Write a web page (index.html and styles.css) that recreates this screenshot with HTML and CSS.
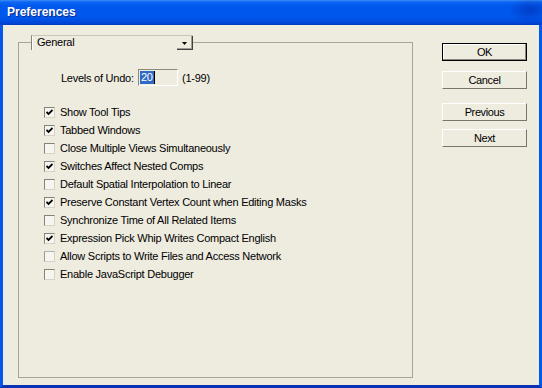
FILE: index.html
```html
<!DOCTYPE html>
<html>
<head>
<meta charset="utf-8">
<title>Preferences</title>
<link rel="stylesheet" href="styles.css">
</head>
<body>
<div class="window">
  <div class="titlebar"><span class="title">Preferences</span></div>
  <div class="client">
    <fieldset class="group">
      <legend class="combo">
        <span class="combo-text">General</span>
        <span class="combo-btn"><svg width="5" height="3" viewBox="0 0 5 3"><path d="M0 0H5L2.5 3Z" fill="#000"/></svg></span>
      </legend>
      <div class="undo-row">
        <span class="label">Levels of Undo:</span>
        <span class="field"><span class="sel">20</span><span class="caret"></span></span>
        <span class="range">(1-99)</span>
      </div>
      <ul class="checks">
        <li class="check"><span class="box on"><svg width="7" height="7" viewBox="0 0 7 7"><path d="M0.5 3L2.5 5L6.5 1" stroke="#000" stroke-width="1.8" fill="none"/></svg></span><span>Show Tool Tips</span></li>
        <li class="check"><span class="box on"><svg width="7" height="7" viewBox="0 0 7 7"><path d="M0.5 3L2.5 5L6.5 1" stroke="#000" stroke-width="1.8" fill="none"/></svg></span><span>Tabbed Windows</span></li>
        <li class="check"><span class="box"></span><span>Close Multiple Views Simultaneously</span></li>
        <li class="check"><span class="box on"><svg width="7" height="7" viewBox="0 0 7 7"><path d="M0.5 3L2.5 5L6.5 1" stroke="#000" stroke-width="1.8" fill="none"/></svg></span><span>Switches Affect Nested Comps</span></li>
        <li class="check"><span class="box"></span><span>Default Spatial Interpolation to Linear</span></li>
        <li class="check"><span class="box on"><svg width="7" height="7" viewBox="0 0 7 7"><path d="M0.5 3L2.5 5L6.5 1" stroke="#000" stroke-width="1.8" fill="none"/></svg></span><span>Preserve Constant Vertex Count when Editing Masks</span></li>
        <li class="check"><span class="box"></span><span>Synchronize Time of All Related Items</span></li>
        <li class="check"><span class="box on"><svg width="7" height="7" viewBox="0 0 7 7"><path d="M0.5 3L2.5 5L6.5 1" stroke="#000" stroke-width="1.8" fill="none"/></svg></span><span>Expression Pick Whip Writes Compact English</span></li>
        <li class="check"><span class="box dim"></span><span>Allow Scripts to Write Files and Access Network</span></li>
        <li class="check"><span class="box"></span><span>Enable JavaScript Debugger</span></li>
      </ul>
    </fieldset>
    <div class="buttons">
      <button class="btn default">OK</button>
      <button class="btn b-cancel">Cancel</button>
      <button class="btn b-prev">Previous</button>
      <button class="btn b-next">Next</button>
    </div>
  </div>
</div>
</body>
</html>
```
FILE: styles.css
```css
html, body {
  margin: 0;
  padding: 0;
}
body {
  width: 542px;
  height: 388px;
  overflow: hidden;
  font-family: "Liberation Sans", Arial, sans-serif;
  font-size: 11px;
  letter-spacing: -0.25px;
  color: #000;
  background: #EEEBDF;
}
.window {
  width: 542px;
  height: 388px;
  display: flex;
  flex-direction: column;
}
.titlebar {
  height: 25px;
  flex: none;
  box-sizing: border-box;
  padding-left: 7px;
  padding-bottom: 2px;
  display: flex;
  align-items: center;
  background:
    radial-gradient(ellipse 22px 12px at 530px 10px, rgba(0, 40, 170, 0.55), rgba(0, 40, 170, 0) 100%),
    linear-gradient(to bottom, #3A8CF5 0, #0D66F2 2px, #0058EE 6px, #0057EC 17px, #0049DD 22px, #003CC6 25px);
}
.title {
  color: #fff;
  font-weight: bold;
  font-size: 12px;
  letter-spacing: 0;
  text-shadow: 1px 1px #0A2A8E;
}
.client {
  flex: 1;
  min-height: 0;
  display: flex;
  gap: 29px;
  padding: 10px 12px 7px 15px;
  border: 3px solid #0558EC;
  border-top: 0;
  border-bottom-color: #0A32B4;
  background: #EEEBDF;
}
.group {
  margin: 0;
  width: 395px;
  box-sizing: border-box;
  min-width: 0;
  padding: 19px 0 0 12px;
  border: 1px solid #A7A59A;
}
.combo {
  margin: 0;
  padding: 0;
  width: 162px;
  height: 15px;
  box-sizing: border-box;
  display: flex;
  align-items: stretch;
  border-top: 1px solid #C9C6B8;
  border-left: 1px solid #85837A;
  box-shadow: inset 1px 0 #FFFFFF;
}
.combo-text {
  padding-left: 5px;
  line-height: 13px;
}
.combo-btn {
  margin-left: auto;
  width: 16px;
  box-sizing: border-box;
  display: flex;
  align-items: center;
  justify-content: center;
  padding-top: 1px;
  border-right: 1px solid #404040;
  border-bottom: 1px solid #404040;
  box-shadow: inset -1px -1px #A09E94;
}
.undo-row {
  display: flex;
  align-items: center;
  height: 17px;
  margin-left: 30px;
}
.label {
  width: 77px;
}
.field {
  width: 40px;
  height: 17px;
  box-sizing: border-box;
  padding: 1px;
  display: flex;
  align-items: center;
  border-top: 1px solid #8C8A80;
  border-left: 1px solid #8C8A80;
  border-right: 1px solid #FFFFFF;
  border-bottom: 1px solid #FFFFFF;
}
.sel {
  background: #316AC5;
  color: #fff;
  height: 13px;
  line-height: 13px;
  padding: 0 1px;
}
.caret {
  width: 1px;
  height: 13px;
  background: #000;
}
.range {
  margin-left: 4px;
}
.checks {
  list-style: none;
  margin: 17px 0 0 13px;
  padding: 0;
}
.check {
  height: 18px;
  display: flex;
  align-items: center;
}
.box {
  width: 11px;
  height: 11px;
  box-sizing: border-box;
  margin-right: 5px;
  flex: none;
  display: flex;
  align-items: center;
  justify-content: center;
  background: #F6F5F0;
  border-top: 1px solid #858379;
  border-left: 1px solid #858379;
  border-right: 1px solid #D6D3C6;
  border-bottom: 1px solid #D6D3C6;
}
.box.dim {
  border-top-color: #B5B3A8;
  border-left-color: #9C9A90;
}
.buttons {
  width: 85px;
  flex: none;
  display: flex;
  flex-direction: column;
  padding-top: 8px;
}
.btn {
  height: 18px;
  width: 85px;
  box-sizing: border-box;
  margin: 0;
  padding: 0;
  font-family: "Liberation Sans", Arial, sans-serif;
  font-size: 11px;
  letter-spacing: -0.4px;
  color: #000;
  background: #EEEBDF;
  border: 1px solid;
  border-color: #FFFFFF #77756C #77756C #FFFFFF;
  border-radius: 0;
}
.btn.default {
  border-color: #000;
  box-shadow: inset -1px -1px #8C8A80, inset 1px 1px #FFFFFF;
}
.b-cancel {
  margin-top: 10px;
}
.b-prev {
  margin-top: 14px;
}
.b-next {
  margin-top: 8px;
}
```
